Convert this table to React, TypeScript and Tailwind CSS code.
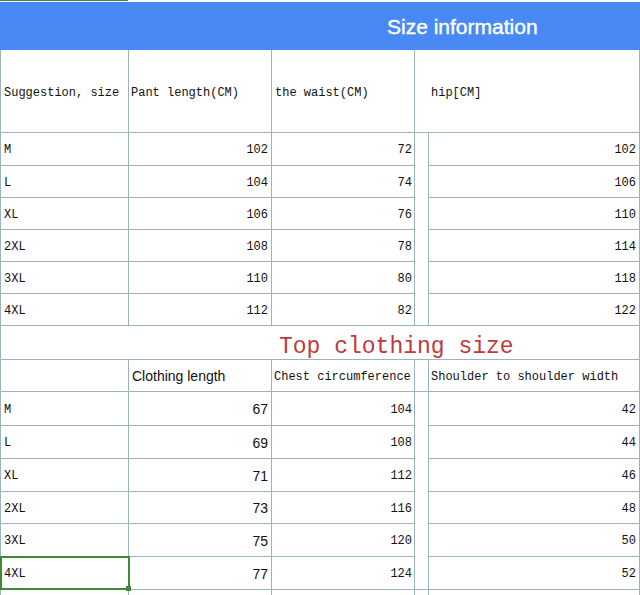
const mono = { fontFamily: '"Liberation Mono", "DejaVu Sans Mono", monospace' };
const sans = { fontFamily: '"Liberation Sans", Arial, sans-serif' };

const line = 'border-[#9bb2c1]';

type Row = [string, string, string, string];

const pants: Row[] = [
  ['M', '102', '72', '102'],
  ['L', '104', '74', '106'],
  ['XL', '106', '76', '110'],
  ['2XL', '108', '78', '114'],
  ['3XL', '110', '80', '118'],
  ['4XL', '112', '82', '122'],
];

const tops: Row[] = [
  ['M', '67', '104', '42'],
  ['L', '69', '108', '44'],
  ['XL', '71', '112', '46'],
  ['2XL', '73', '116', '48'],
  ['3XL', '75', '120', '50'],
  ['4XL', '77', '124', '52'],
];

const cols = 'grid grid-cols-[129px_143px_143px_14px_211px]';

function DataRow({ row, h, last, sansNum, selected }: { row: Row; h: string; last?: boolean; sansNum?: boolean; selected?: boolean }) {
  const cell = `border-r border-b ${line} flex items-center pt-[2px] text-[12px] text-[#111]`;
  return (
    <div className={`${cols} ${h}`} style={mono}>
      <div className={`${cell} relative border-l pl-[3px]`}>
        {row[0]}
        {selected && (
          <div className="absolute -left-px -top-px w-[130px] h-[34px] border-2 border-[#3d8b35]">
            <div className="absolute -right-[3px] -bottom-[3px] w-[5px] h-[5px] bg-[#3d8b35]" />
          </div>
        )}
      </div>
      <div className={`${cell} justify-end pr-[3px]`} style={sansNum ? { ...sans, fontSize: 14 } : undefined}>
        {row[1]}
      </div>
      <div className={`${cell} justify-end pr-[2px]`}>{row[2]}</div>
      <div className={`border-r ${line} ${last ? 'border-b' : ''}`} />
      <div className={`${cell} justify-end pr-[3px]`}>{row[3]}</div>
    </div>
  );
}

export default function App() {
  const rowHeightsTop = ['h-[33px]', 'h-[32px]', 'h-[32px]', 'h-[32px]', 'h-[32px]', 'h-[32px]'];
  const rowHeightsBottom = ['h-[34px]', 'h-[33px]', 'h-[33px]', 'h-[32px]', 'h-[33px]', 'h-[33px]'];
  const head = `border-r border-b ${line} flex items-center text-[12px] text-[#111]`;

  return (
    <div className="w-[640px] h-[595px] overflow-hidden bg-white">
      <div className="h-[2px] bg-white">
        <div className="w-[128px] h-px bg-[#3d8b35]" />
      </div>
      <div className="h-[48px] bg-[#4889f4] flex items-center pt-[2px] pl-[387px]">
        <span className="text-white text-[21px] [-webkit-text-stroke:0.4px_white]" style={sans}>
          Size information
        </span>
      </div>

      <div className={`${cols} h-[83px]`} style={mono}>
        <div className={`${head} border-l pl-[3px] pt-[4px]`}>Suggestion, size</div>
        <div className={`${head} pl-[2px] pt-[4px]`}>Pant length(CM)</div>
        <div className={`${head} pl-[3px] pt-[4px]`}>the waist(CM)</div>
        <div className={`border-b ${line}`} />
        <div className={`${head} pl-[2px] pt-[4px]`}>hip[CM]</div>
      </div>
      {pants.map((r, i) => (
        <DataRow key={r[0]} row={r} h={rowHeightsTop[i]} last={i === pants.length - 1} />
      ))}

      <div className={`h-[34px] border-l border-r border-b ${line} flex items-center pt-[10px] pl-[278px]`}>
        <span className="text-[23px] text-[#c0393d] leading-none" style={mono}>
          Top clothing size
        </span>
      </div>

      <div className={`${cols} h-[32px]`} style={mono}>
        <div className={`${head} border-l`} />
        <div className={`${head} pl-[3px] pt-[1px] text-[14px]`} style={sans}>
          Clothing length
        </div>
        <div className={`${head} pl-[2px] pt-[2px]`}>Chest circumference</div>
        <div className={`border-r border-b ${line}`} />
        <div className={`${head} pl-[2px] pt-[2px]`}>Shoulder to shoulder width</div>
      </div>
      {tops.map((r, i) => (
        <DataRow
          key={r[0]}
          row={r}
          h={rowHeightsBottom[i]}
          last={i === tops.length - 1}
          sansNum
          selected={i === tops.length - 1}
        />
      ))}
      <div className={`${cols} h-[10px]`}>
        <div className={`border-l border-r ${line}`} />
        <div className={`border-r ${line}`} />
        <div className={`border-r ${line}`} />
        <div className={`border-r ${line}`} />
        <div className={`border-r ${line}`} />
      </div>
    </div>
  );
}
